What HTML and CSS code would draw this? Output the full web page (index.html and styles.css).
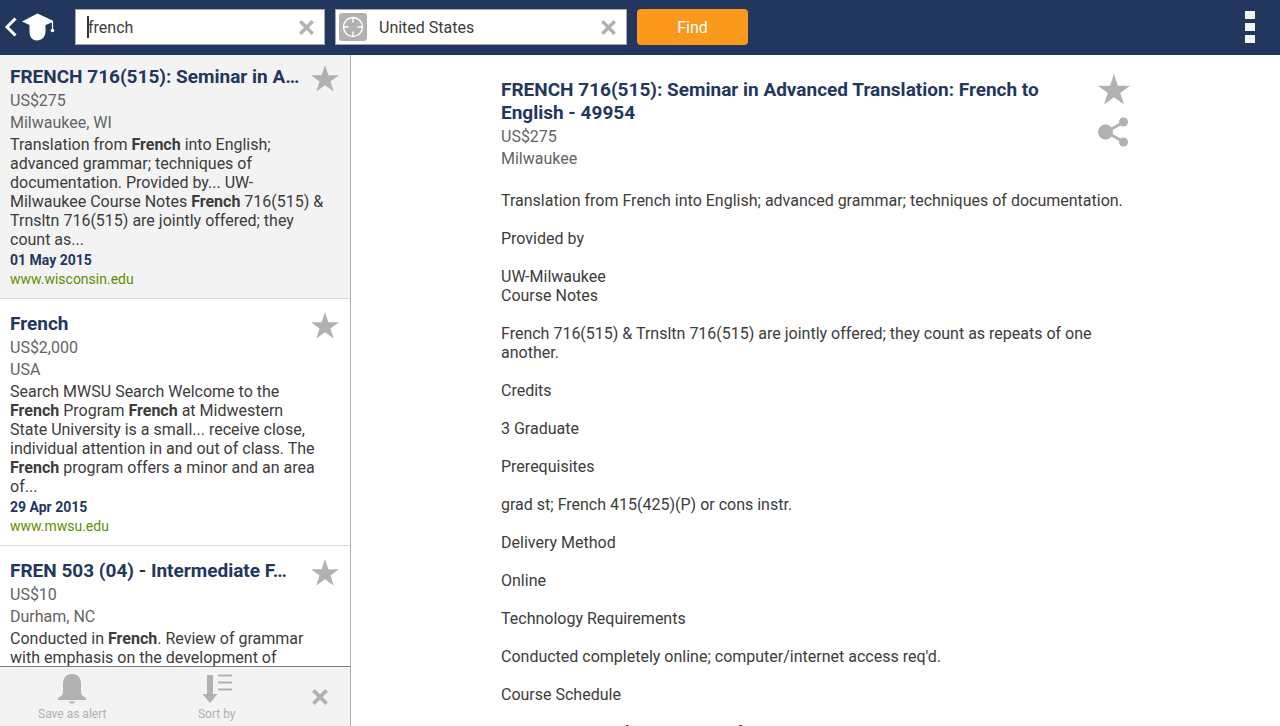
FILE: index.html
```html
<!DOCTYPE html>
<html lang="en">
<head>
<meta charset="utf-8">
<title>Course search</title>
<link rel="stylesheet" href="styles.css">
</head>
<body>
<svg class="defs" aria-hidden="true">
  <symbol id="star" viewBox="0 0 32 31"><path d="M16 0l3.9 11.8H32l-9.7 7.2L26 30.5l-10-7.2-10 7.2L9.700 19 0 11.800h12.100z"/></symbol>
  <symbol id="cross" viewBox="0 0 14 14"><path d="M1.200 1.200l11.600 11.600M12.800 1.200l-11.600 11.600" fill="none" stroke="currentColor" stroke-width="3.200"/></symbol>
</svg>
<header class="topbar">
  <button class="home" aria-label="Back to home">
    <svg width="52" height="30" viewBox="0 0 52 30">
      <path d="M12.500 6.500L4 15l8.500 8.500" fill="none" stroke="#fff" stroke-width="3"/>
      <path d="M34.500 1.500L50 8.800v1.200L42.500 13v6.500c0 5-3.500 9-8.500 9s-7.500-4-7.500-9V13L19 9.500z" fill="#fff"/>
      <path d="M49.500 9v9" stroke="#fff" stroke-width="1.200"/>
      <circle cx="49.500" cy="18.500" r="1.800" fill="#fff"/>
    </svg>
  </button>
  <form class="search" onsubmit="return false">
    <div class="field field-what">
      <span class="caret"></span>
      <input type="text" value="french" aria-label="Keyword">
      <button type="button" class="clear" aria-label="Clear keyword"><svg width="15" height="15"><use href="#cross"/></svg></button>
    </div>
    <div class="field field-where">
      <button type="button" class="locate" aria-label="Use my location">
        <svg width="22" height="22" viewBox="0 0 22 22" fill="none" stroke="#fff" stroke-width="1.400"><circle cx="11" cy="11" r="9.500"/><path d="M11 1.500v5M11 15.500v5M1.500 11h5M15.500 11h5"/></svg>
      </button>
      <input type="text" value="United States" aria-label="Location">
      <button type="button" class="clear" aria-label="Clear location"><svg width="15" height="15"><use href="#cross"/></svg></button>
    </div>
    <button class="find">Find</button>
  </form>
  <button class="menu" aria-label="Menu"><i></i><i></i><i></i></button>
</header>
<div class="panes">
  <aside class="sidebar">
    <div class="results">
      <article class="result selected">
        <div class="result-head"><h2>FRENCH 716(515): Seminar in A…</h2>
        <button class="fav" aria-label="Save to favourites"><svg width="28" height="27"><use href="#star"/></svg></button></div>
        <p class="meta">US$275</p>
        <p class="meta">Milwaukee, WI</p>
        <p class="summary">Translation from <b>French</b> into English; advanced grammar; techniques of documentation. Provided by... UW-Milwaukee Course Notes <b>French</b> 716(515) &amp; Trnsltn 716(515) are jointly offered; they<br>count as...</p>
        <p class="date">01 May 2015</p>
        <p class="site"><a href="#">www.wisconsin.edu</a></p>
      </article>
      <article class="result">
        <div class="result-head"><h2>French</h2>
        <button class="fav" aria-label="Save to favourites"><svg width="28" height="27"><use href="#star"/></svg></button></div>
        <p class="meta">US$2,000</p>
        <p class="meta">USA</p>
        <p class="summary">Search MWSU Search Welcome to the <b>French</b> Program <b>French</b> at Midwestern<br>State University is a small... receive close, individual attention in and out of class. The <b>French</b> program offers a minor and an area of...</p>
        <p class="date">29 Apr 2015</p>
        <p class="site"><a href="#">www.mwsu.edu</a></p>
      </article>
      <article class="result">
        <div class="result-head"><h2>FREN 503 (04) - Intermediate F…</h2>
        <button class="fav" aria-label="Save to favourites"><svg width="28" height="27"><use href="#star"/></svg></button></div>
        <p class="meta">US$10</p>
        <p class="meta">Durham, NC</p>
        <p class="summary">Conducted in <b>French</b>. Review of grammar with emphasis on the development of</p>
      </article>
    </div>
    <div class="toolbar">
      <button class="tool"><svg width="28" height="30" viewBox="0 0 28 30"><path d="M14 0c6 0 9 4 9 10v8c0 3 2 4.500 5 6v2H0v-2c3-1.500 5-3 5-6v-8c0-6 3-10 9-10zM11 27.500h6c-.5 1.500-1.500 2-3 2s-2.500-.5-3-2z"/></svg><span>Save as alert</span></button>
      <button class="tool"><svg width="30" height="30" viewBox="0 0 30 30"><path d="M5 1h6v19h4.500L8 29 .5 20H5zM16 .5h14v2H16zM16 7.500h14v2H16zM16 14.500h14v2H16z"/></svg><span>Sort by</span></button>
      <button class="close" aria-label="Close toolbar"><svg width="16" height="16"><use href="#cross"/></svg></button>
    </div>
  </aside>
  <main class="detail">
    <article class="course">
      <div class="course-head">
        <div class="course-title">
          <h1>FRENCH 716(515): Seminar in Advanced Translation: French to English - 49954</h1>
          <p class="meta">US$275</p>
          <p class="meta">Milwaukee</p>
        </div>
        <div class="actions">
          <button aria-label="Save to favourites"><svg width="32" height="31"><use href="#star"/></svg></button>
          <button aria-label="Share"><svg width="32" height="30" viewBox="0 0 32 30"><path d="M8 15L26 5M8 15l18 10" stroke="currentColor" stroke-width="2.600"/><circle cx="7.500" cy="15" r="7.500"/><circle cx="25.500" cy="5" r="4.500"/><circle cx="25.500" cy="25" r="4.500"/></svg></button>
        </div>
      </div>
      <div class="body">
        <p>Translation from French into English; advanced grammar; techniques of documentation.</p>
        <p>Provided by</p>
        <p>UW-Milwaukee<br>Course Notes</p>
        <p>French 716(515) &amp; Trnsltn 716(515) are jointly offered; they count as repeats of one another.</p>
        <p>Credits</p>
        <p>3 Graduate</p>
        <p>Prerequisites</p>
        <p>grad st; French 415(425)(P) or cons instr.</p>
        <p>Delivery Method</p>
        <p>Online</p>
        <p>Technology Requirements</p>
        <p>Conducted completely online; computer/internet access req'd.</p>
        <p>Course Schedule</p>
        <p>See the course information page for session start and end dates.</p>
      </div>
    </article>
  </main>
</div>
</body>
</html>
```
FILE: styles.css
```css
* { box-sizing: border-box; }
body {
  margin: 0;
  height: 100vh;
  display: flex;
  flex-direction: column;
  overflow: hidden;
  font: 16px/19px Roboto, sans-serif;
  color: #3c3c3c;
  background: #fff;
}
h1, h2, p { margin: 0; }
button {
  padding: 0;
  border: 0;
  background: none;
  font: inherit;
  color: #b1b1b1;
}
svg { display: block; fill: currentColor; }
.defs { position: absolute; width: 0; height: 0; }

.topbar {
  flex: none;
  display: flex;
  align-items: center;
  height: 55px;
  padding: 0 25px 1px 3px;
  background: #23375e;
}
.home { width: 72px; }
.search { display: flex; gap: 10px; }
.field {
  position: relative;
  display: flex;
  align-items: center;
  height: 36px;
  padding-right: 10px;
  border: 1px solid #a9a9a9;
  background: #fff;
}
.field-what { width: 250px; padding-left: 12px; }
.field-where { width: 292px; padding-left: 3px; gap: 12px; }
.field input {
  flex: 1;
  min-width: 0;
  padding: 0;
  border: 0;
  outline: 0;
  background: none;
  font: inherit;
  color: #3c3c3c;
}
.caret {
  position: absolute;
  left: 11px;
  width: 2px;
  height: 22px;
  background: #333;
}
.locate {
  display: grid;
  place-items: center;
  width: 28px;
  height: 28px;
  border-radius: 3px;
  background: #b1b1b1;
}
.find {
  width: 111px;
  height: 36px;
  border-radius: 4px;
  background: #fb991c;
  color: #fff;
}
.menu {
  display: grid;
  gap: 4px;
  margin-left: auto;
}
.menu i { width: 10px; height: 8px; background: #f3f3f3; }

.panes { flex: 1; display: flex; min-height: 0; }
.sidebar {
  flex: none;
  display: flex;
  flex-direction: column;
  width: 351px;
  border-right: 1px solid #b1b1b1;
}
.results { flex: 1; min-height: 0; overflow: hidden; }
.result { padding: 13px 11px 9px 10px; border-bottom: 1px solid #d9d9d9; }
.selected { padding-top: 10px; background: #f3f3f3; }
.result-head {
  display: flex;
  justify-content: space-between;
  gap: 4px;
  height: 25px;
}
h1, h2 {
  font-size: 19px;
  line-height: 23px;
  font-weight: 700;
  color: #23375e;
}
h2 { overflow: hidden; white-space: nowrap; text-overflow: ellipsis; }
.fav { align-self: flex-start; }
.meta { line-height: 22px; color: #646464; }
.summary { margin: 1px 0 2px; padding-right: 12px; }
.date { font-size: 14px; font-weight: 700; color: #23375e; }
.site { font-size: 14px; }
.site a { color: #5f8f00; text-decoration: none; }

.toolbar {
  flex: none;
  display: flex;
  height: 60px;
  border-top: 1px solid #808080;
  background: #f3f3f3;
}
.tool {
  flex: 1;
  display: flex;
  flex-direction: column;
  align-items: center;
  padding-top: 7px;
  font-size: 12px;
  line-height: 20px;
}
.close { display: grid; place-items: center; width: 61px; }

.detail { flex: 1; min-width: 0; overflow: hidden; }
.course { max-width: 629px; margin: 0 auto; padding-top: 19px; }
.course-head { display: flex; gap: 40px; }
.course-title { flex: 1; padding-top: 4px; }
.course-title h1 { margin-bottom: 2px; }
.actions { display: grid; align-content: start; gap: 12px; }
.body { padding-top: 21px; }
.body p { margin-bottom: 19px; }
```
